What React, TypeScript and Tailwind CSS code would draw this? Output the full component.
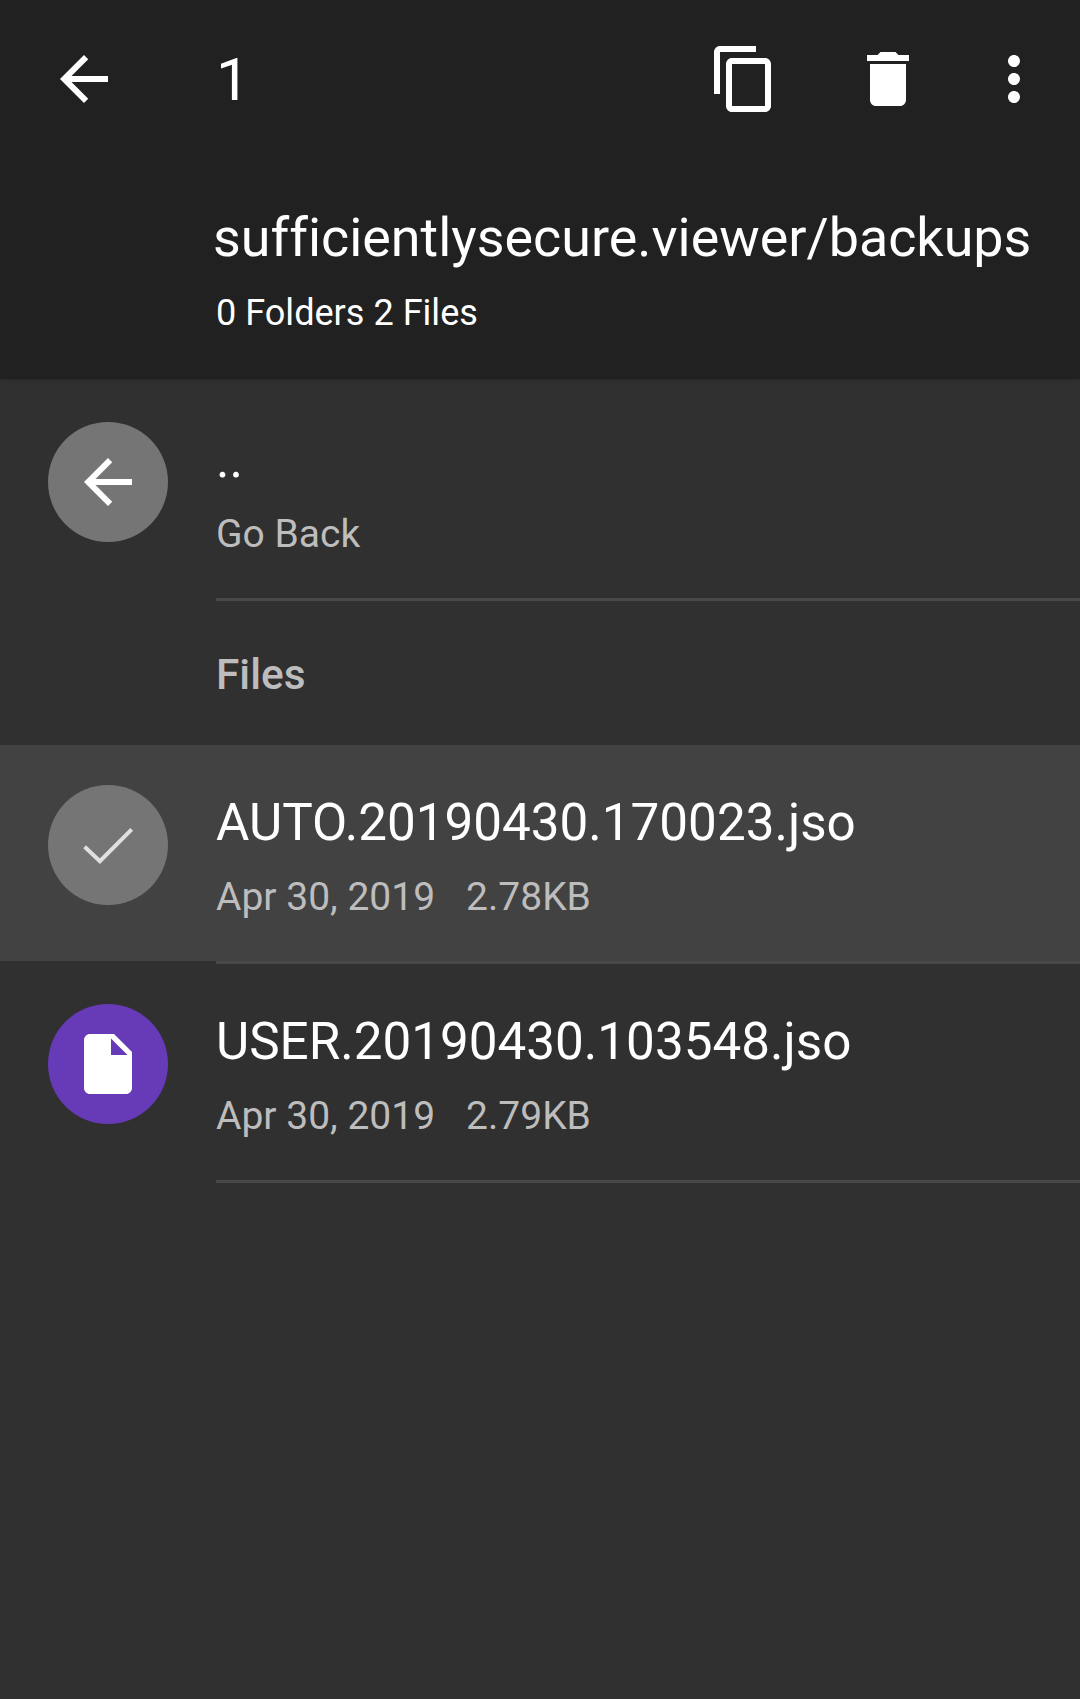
const font = "font-['Roboto',sans-serif]";

function BackIcon({ className }: { className: string }) {
  return (
    <svg viewBox="0 0 24 24" className={className} fill="currentColor">
      <path d="M20 11H7.83l5.59-5.59L12 4l-8 8 8 8 1.41-1.41L7.83 13H20v-2z" />
    </svg>
  );
}

function FileRow({
  name,
  date,
  size,
  selected,
}: {
  name: string;
  date: string;
  size: string;
  selected?: boolean;
}) {
  return (
    <div className="h-[219px]">
      <div className={`flex h-[216px] items-start ${selected ? 'bg-[#424242]' : ''}`}>
        <div
          className={`ml-12 mt-10 flex h-[120px] w-[120px] shrink-0 items-center justify-center rounded-full ${
            selected ? 'bg-[#757575]' : 'bg-[#673ab7]'
          }`}
        >
          {selected ? (
            <svg viewBox="0 0 24 24" className="h-[72px] w-[72px]" fill="none" stroke="#e0e0e0" strokeWidth="1.35">
              <path d="M4.2 12.6 9.3 17.4 19.9 6.8" />
            </svg>
          ) : (
            <svg viewBox="0 0 24 24" className="h-[72px] w-[72px]" fill="#ffffff">
              <path d="M6 2c-1.1 0-2 .9-2 2v16c0 1.1.9 2 2 2h12c1.1 0 2-.9 2-2V8l-6-6H6zm7 7V3.5L18.5 9H13z" />
            </svg>
          )}
        </div>
        <div className="ml-12 flex flex-col">
          <div className="mt-[48px] text-[51.2px] leading-[60px] text-white">{name}</div>
          <div className="mt-[21px] flex text-[39px] leading-[46px] text-[#bdbdbd]">
            <span>{date}</span>
            <span className="ml-[31px]">{size}</span>
          </div>
        </div>
      </div>
      <div className="ml-[216px] h-[3px] bg-[#484848]" />
    </div>
  );
}

export default function App() {
  return (
    <div className={`flex h-[1699px] w-[1080px] flex-col overflow-hidden bg-[#303030] ${font}`}>
      <header className="relative h-[379px] shrink-0 bg-[#212121] text-white shadow-[0_1px_3px_rgba(0,0,0,0.2)]">
        <div className="flex h-[158px] items-center">
          <BackIcon className="ml-[48px] h-[72px] w-[72px]" />
          <div className="ml-[96px] mt-[2px] text-[60px] leading-none">1</div>
          <div className="ml-auto flex items-center">
            <svg viewBox="0 0 24 24" className="h-[72px] w-[72px]" fill="currentColor">
              <path d="M16 1H4c-1.1 0-2 .9-2 2v14h2V3h12V1zm3 4H8c-1.1 0-2 .9-2 2v14c0 1.1.9 2 2 2h11c1.1 0 2-.9 2-2V7c0-1.1-.9-2-2-2zm0 16H8V7h11v14z" />
            </svg>
            <svg viewBox="0 0 24 24" className="ml-[72px] h-[72px] w-[72px]" fill="currentColor">
              <path d="M6 19c0 1.1.9 2 2 2h8c1.1 0 2-.9 2-2V7H6v12zM19 4h-3.5l-1-1h-5l-1 1H5v2h14V4z" />
            </svg>
            <svg viewBox="0 0 24 24" className="ml-[54px] mr-[30px] h-[72px] w-[72px]" fill="currentColor">
              <path d="M12 8c1.1 0 2-.9 2-2s-.9-2-2-2-2 .9-2 2 .9 2 2 2zm0 2c-1.1 0-2 .9-2 2s.9 2 2 2 2-.9 2-2-.9-2-2-2zm0 6c-1.1 0-2 .9-2 2s.9 2 2 2 2-.9 2-2-.9-2-2-2z" />
            </svg>
          </div>
        </div>
        <div className="ml-[213px] mt-[48px] whitespace-nowrap text-[53.85px] leading-[64px] [font-variant-ligatures:none]">
          sufficientlysecure.viewer/backups
        </div>
        <div className="ml-[216px] mt-[21px] text-[36.1px] leading-[44px]">0 Folders 2 Files</div>
      </header>

      <main className="flex-1">
        <div className="h-[222px]">
          <div className="flex h-[219px] items-start">
            <div className="ml-12 mt-[43px] flex h-[120px] w-[120px] shrink-0 items-center justify-center rounded-full bg-[#757575] text-white">
              <BackIcon className="h-[72px] w-[72px]" />
            </div>
            <div className="ml-12 flex flex-col">
              <div className="mt-[51px] text-[51.2px] leading-[60px] text-white">..</div>
              <div className="mt-[21px] text-[39px] leading-[46px] text-[#bdbdbd]">Go Back</div>
            </div>
          </div>
          <div className="ml-[216px] h-[3px] bg-[#484848]" />
        </div>
        <div className="flex h-[144px] items-center pl-[216px] pt-[3px] text-[42.4px] font-medium leading-[44px] text-[#bdbdbd]">
          Files
        </div>
        <FileRow name="AUTO.20190430.170023.jso" date="Apr 30, 2019" size="2.78KB" selected />
        <FileRow name="USER.20190430.103548.jso" date="Apr 30, 2019" size="2.79KB" />
      </main>
    </div>
  );
}
